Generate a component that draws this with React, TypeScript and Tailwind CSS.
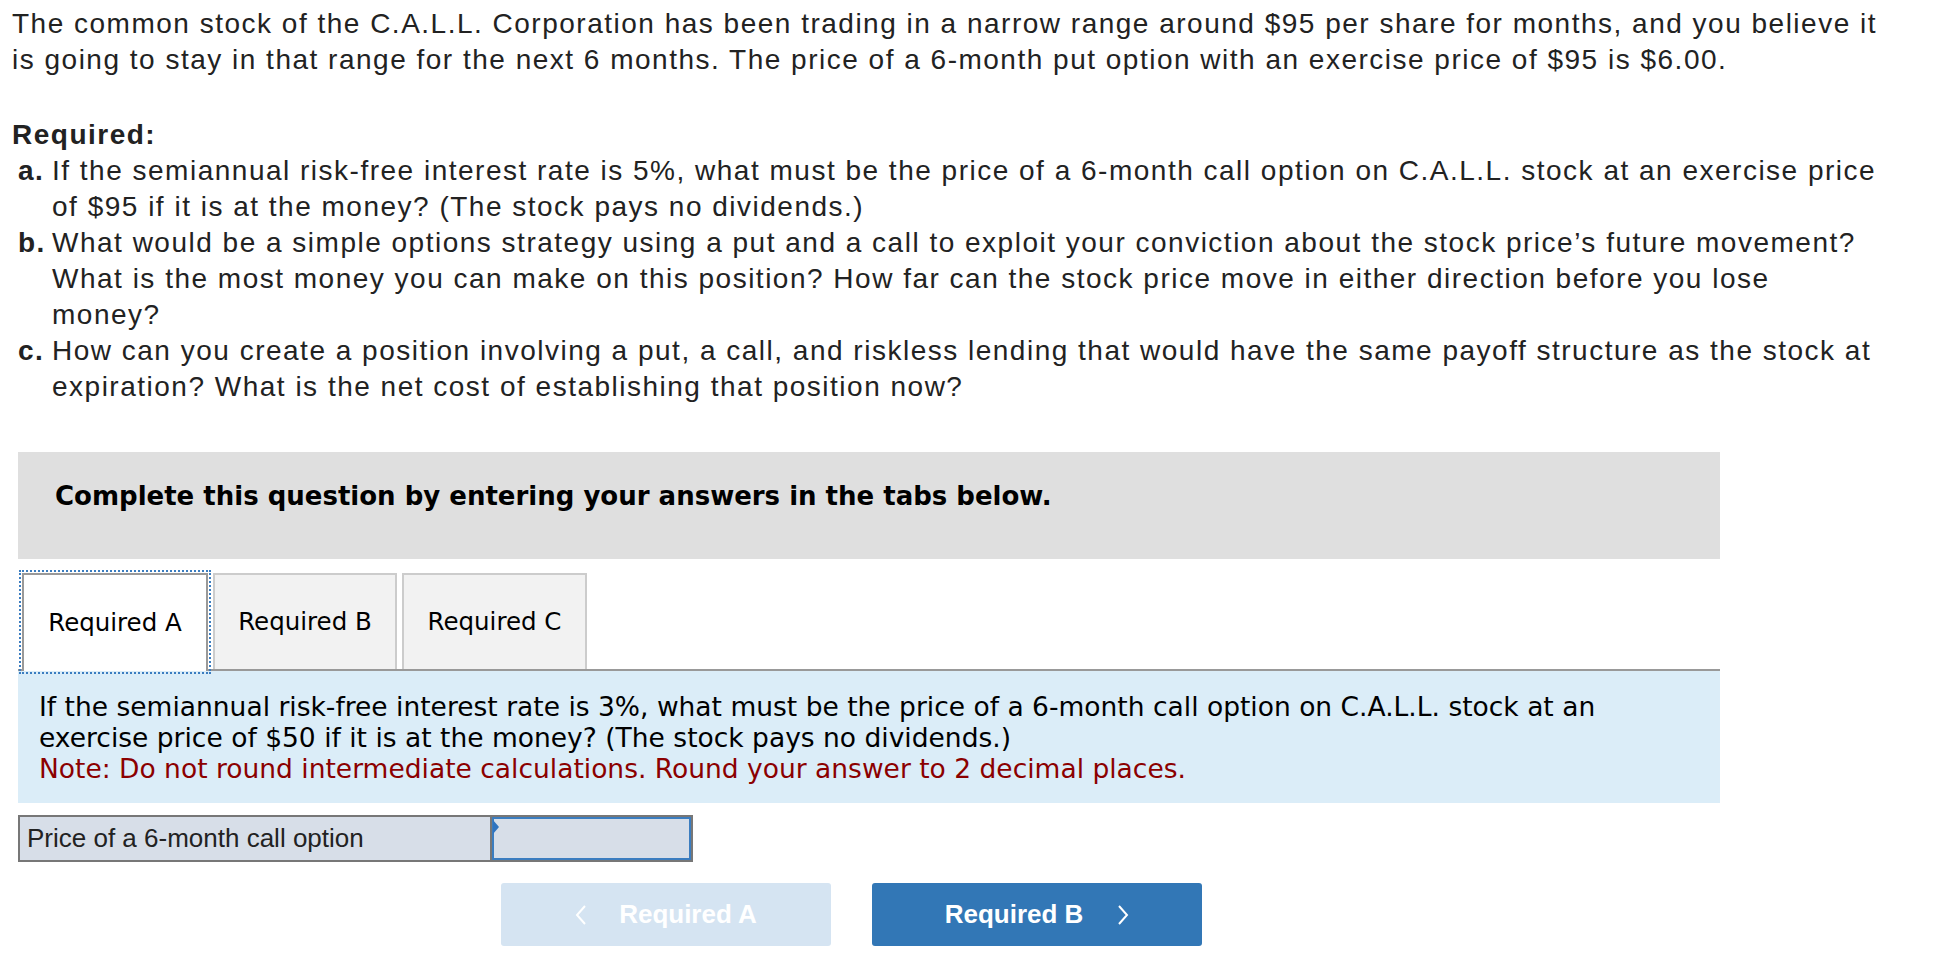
import React from "react";

const mainFont = { fontFamily: '"Liberation Sans", Arial, sans-serif' };

export default function App() {
  return (
    <div className="w-[1950px] min-h-[976px] bg-white text-[#222]">
      {/* Question text */}
      <div className="pl-[12px] pt-[6px] text-[28px] leading-[36px] tracking-[1.5px] font-['Liberation_Sans',Arial,sans-serif]">
        <div className="whitespace-nowrap">
          The common stock of the C.A.L.L. Corporation has been trading in a narrow range around $95 per share for months, and you believe it
        </div>
        <div className="whitespace-nowrap">
          is going to stay in that range for the next 6 months. The price of a 6-month put option with an exercise price of $95 is $6.00.
        </div>
        <div className="mt-[39px] font-bold">Required:</div>
        <div className="flex pl-[6px]">
          <span className="w-[34px] shrink-0 font-bold">a.</span>
          <div className="whitespace-nowrap">
            <div>If the semiannual risk-free interest rate is 5%, what must be the price of a 6-month call option on C.A.L.L. stock at an exercise price</div>
            <div>of $95 if it is at the money? (The stock pays no dividends.)</div>
          </div>
        </div>
        <div className="flex pl-[6px]">
          <span className="w-[34px] shrink-0 font-bold">b.</span>
          <div className="whitespace-nowrap">
            <div>What would be a simple options strategy using a put and a call to exploit your conviction about the stock price’s future movement?</div>
            <div>What is the most money you can make on this position? How far can the stock price move in either direction before you lose</div>
            <div>money?</div>
          </div>
        </div>
        <div className="flex pl-[6px]">
          <span className="w-[34px] shrink-0 font-bold">c.</span>
          <div className="whitespace-nowrap">
            <div>How can you create a position involving a put, a call, and riskless lending that would have the same payoff structure as the stock at</div>
            <div>expiration? What is the net cost of establishing that position now?</div>
          </div>
        </div>
      </div>

      {/* Tabs panel */}
      <div className="ml-[18px] mt-[47px] w-[1702px]">
        <div className="h-[107px] bg-[#dfdfdf] pl-[37px] pt-[29px]">
          <div className="whitespace-nowrap text-[26px] leading-[30px] font-bold text-black font-['DejaVu_Sans',Verdana,sans-serif]">
            Complete this question by entering your answers in the tabs below.
          </div>
        </div>

        <div className="mt-[14px] flex items-end gap-[5px] pl-[4px] border-b-2 border-[#999] h-[98px]">
          <div className="relative h-[98px] w-[186px] bg-white border-2 border-b-0 border-[#999] flex items-center justify-center outline-2 outline-dotted outline-[#3b7dc0] outline-offset-[1px] -mb-[2px]">
            <span className="text-[24.5px] text-black font-['DejaVu_Sans',Verdana,sans-serif]">Required A</span>
          </div>
          <div className="h-[96px] w-[184px] bg-[#f2f2f2] border-2 border-b-0 border-[#ccc] flex items-center justify-center">
            <span className="text-[24.5px] text-black font-['DejaVu_Sans',Verdana,sans-serif]">Required B</span>
          </div>
          <div className="h-[96px] w-[185px] bg-[#f2f2f2] border-2 border-b-0 border-[#ccc] flex items-center justify-center">
            <span className="text-[24.5px] text-black font-['DejaVu_Sans',Verdana,sans-serif]">Required C</span>
          </div>
        </div>

        <div className="bg-[#dbedf8] pl-[21px] pt-[20px] pb-[19px] text-[26.5px] leading-[31px] text-black font-['DejaVu_Sans',Verdana,sans-serif]">
          <div className="whitespace-nowrap">
            If the semiannual risk-free interest rate is 3%, what must be the price of a 6-month call option on C.A.L.L. stock at an
          </div>
          <div className="whitespace-nowrap">
            exercise price of $50 if it is at the money? (The stock pays no dividends.)
          </div>
          <div className="whitespace-nowrap text-[#8b0000]">
            Note: Do not round intermediate calculations. Round your answer to 2 decimal places.
          </div>
        </div>

        {/* Input row */}
        <div className="mt-[12px] flex h-[47px] w-[675px] border-2 border-[#777] bg-[#d7dee8]" style={mainFont}>
          <div className="w-[472px] border-r-2 border-[#777] pl-[7px] flex items-center text-[26px] text-[#222]">
            Price of a 6-month call option
          </div>
          <div className="relative flex-1 border-2 border-[#3b7dc0]">
            <svg className="absolute left-[-1px] top-[1px]" width="6" height="14" viewBox="0 0 6 14">
              <polygon points="0,0 6,7 0,14" fill="#2f74c0" />
            </svg>
          </div>
        </div>

        {/* Nav buttons */}
        <div className="mt-[21px] ml-[483px] flex gap-[41px]" style={mainFont}>
          <div className="h-[63px] w-[330px] rounded-[3px] bg-[#d5e4f2] flex items-center justify-center gap-[32px] text-white text-[26px] font-bold">
            <svg width="12" height="22" viewBox="0 0 12 22">
              <polyline points="10,2 2,11 10,20" fill="none" stroke="white" strokeWidth="2" />
            </svg>
            <span>Required A</span>
          </div>
          <div className="h-[63px] w-[330px] rounded-[3px] bg-[#3277b6] flex items-center justify-center gap-[34px] text-white text-[26px] font-bold">
            <span>Required B</span>
            <svg width="12" height="22" viewBox="0 0 12 22">
              <polyline points="2,2 10,11 2,20" fill="none" stroke="white" strokeWidth="2" />
            </svg>
          </div>
        </div>
      </div>
    </div>
  );
}
